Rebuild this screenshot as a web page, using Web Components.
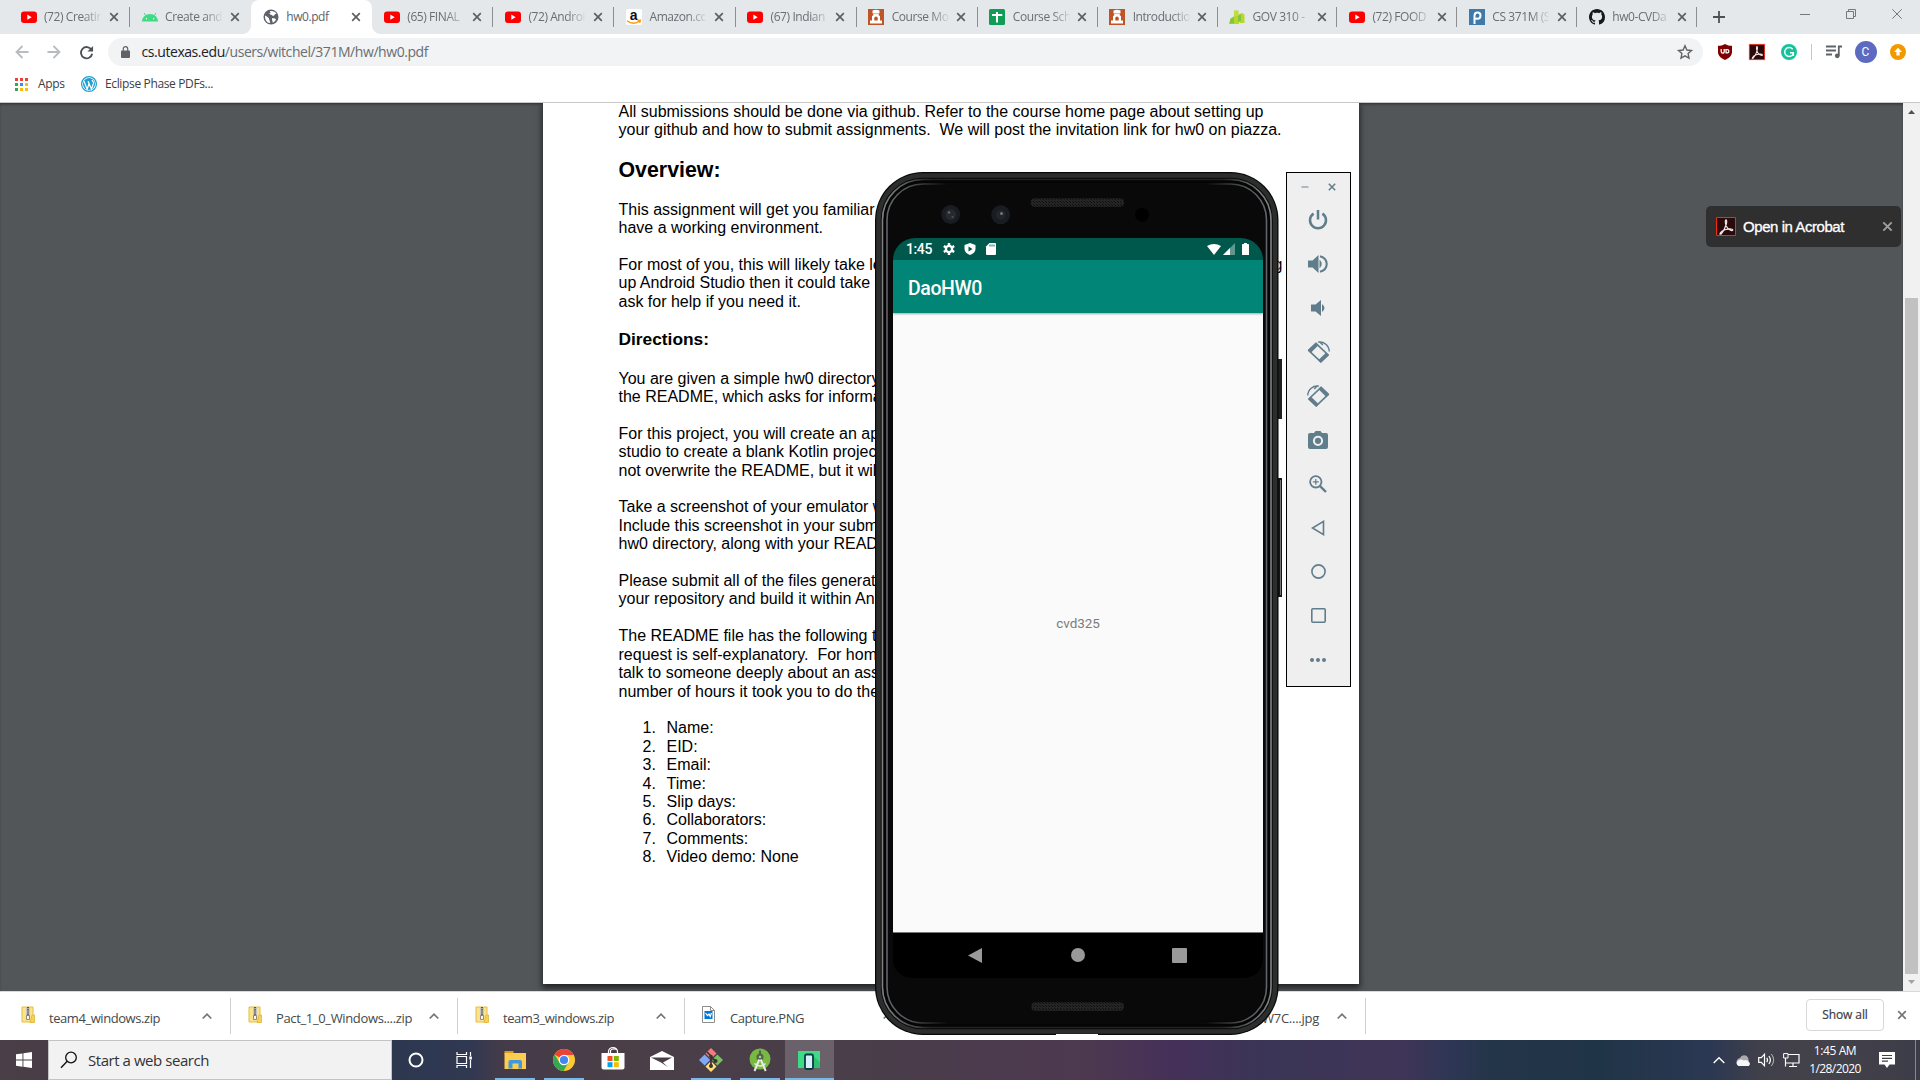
<!DOCTYPE html>
<html lang="en">
<head>
<meta charset="utf-8">
<title>hw0.pdf</title>
<style>
html,body{margin:0;height:100%;overflow:hidden}
body{font-family:"Open Sans","Noto Sans",sans-serif}
</style>
</head>
<body>
<desktop-screen></desktop-screen>
<script>
const SLATE = '#607d8b';
const YT = '<rect x="0" y="2.5" width="16" height="11.5" rx="3" fill="#f00"/><path d="M6.3 5.6l4.4 2.6-4.4 2.6z" fill="#fff"/>';
const TOWER = '<path d="M0 0h16v16H0z" fill="#bf5427"/><path d="M4.500 1.500q3.500-1.500 7 0v3h-.7v2.200h1.200v4.800H14v3H2v-3h2V6.700h1.200V4.500h-.7z" fill="#fff"/><path d="M6.300 11.500V9.200a1.700 1.700 0 013.400 0v2.300z" fill="#bf5427"/><path d="M4.500 4.300h7v.8h-7z" fill="#bf5427" opacity=".6"/>';
const ACRO = '<path d="M4 16.500c1.200-2.600 4-3.400 6-4 2-.6 4.200-.9 6-.3 1.500.6.6 1.800-.8 1.300-2.500-.9-5-4-5.600-6.600-.5-2.200-.4-4 .4-4 1 0 .8 2.600.2 4.600-.8 2.600-2.600 6.600-4.700 9-.9 1-2 .8-1.500 0z" fill="none" stroke="#f4e9e7" stroke-width="1.200"/>';
const ZIP = '<path d="M1 1h11v15H1z" fill="#fbe38e" stroke="#e4bd45"/><path d="M11 9h2.500v7.500H9z" fill="#f6d05c" stroke="#dfb534" stroke-width=".8"/><path d="M5 1h4v11H5z" fill="#c9c7bd"/><path d="M7 1v11" stroke="#55534c" stroke-width="2" stroke-dasharray="1.200 1"/><path d="M5.500 9.500h3v4h-3z" fill="#f7f7f2" stroke="#77736a" stroke-width=".8"/>';
const ROT = '<g fill="none" stroke="'+SLATE+'"><path d="M9 2.300L1.600 9.300 13.800 20.900 21.200 14z" stroke-width="1.600" stroke-linejoin="round"/><path d="M9 1.500L.9 9.300l2.700 2.600L11.500 4.300zM13.800 21.800l8.100-7.700-2.700-2.600-8 7.700z" fill="'+SLATE+'" stroke="none"/><path d="M11 1.100C17 .100 22.100 4.500 22.300 10.500M12.500.700l3.300 3.300" stroke-width="1.400"/></g>';
/* name: [viewBox width, viewBox height, markup] */
const ICONS = {
  yt:[16,16,YT], tower:[16,16,TOWER],
  android:[17,16,'<path d="M0 12.500a8.500 7.500 0 0117 0z" fill="#3ddc84"/><path d="M4 6.800L2.300 4M13 6.800L14.700 4" stroke="#3ddc84" stroke-width="1"/><circle cx="4.700" cy="9.700" r=".7" fill="#fff"/><circle cx="12.300" cy="9.700" r=".7" fill="#fff"/>'],
  globe:[16,16,'<circle cx="8" cy="8" r="7.500" fill="#5f6368"/><path d="M2 6.500c1.200.4 2.700 1.600 3.600 2.600.8.8.3 1.600 1 2.400l.7 2.500C4 14.300 1.700 11 2 6.500zM6.500 2.200c1 .3 1.300 1.300.5 2l-1.200.7c.8.9 2.200.2 3 1 .6.800 1.600 1.200 2.400.6l1-1.500 1.400-.2C12.600 3 9.700 1.400 6.500 2.200zM9 9.300c1.400-.4 3.300-.1 4 1.200-.7 1.700-2 2.800-3.300 3.200.2-1.600-1.200-2.600-.7-4.400z" fill="#fff"/>'],
  amazon:[16,16,'<rect width="16" height="16" rx="2" fill="#fff"/><text x="7.600" y="10.800" text-anchor="middle" font-family="Liberation Sans" font-weight="700" font-size="14" fill="#111">a</text><path d="M1 11.800c4 2.800 9 2.800 12.500.4M11.600 11.400l2.800-.2-.8 2.600" fill="none" stroke="#f90" stroke-width="1.400"/>'],
  sheet:[16,16,'<rect width="16" height="16" rx="1.500" fill="#0f9d58"/><path d="M8 3v10.500M3 6h10.300" stroke="#fff" stroke-width="2"/>'],
  clover:[16,16,'<path d="M5 1.500h4.500v4L13 4l2.500 1.500V14H11l-1-2v3H0l1.500-5L5 7z" fill="#b5d82e"/><path d="M1.500 9.500L5 8v6.500H.5zM9 7l3-2v7l-3 1z" fill="#86c53a"/><path d="M5 2h4v5H5z" fill="#c3dc3a"/>'],
  piazza:[16,16,'<path d="M0 0h16v16H0z" fill="#3e7aab"/><path d="M5.500 15V6.800C5.500 4.700 6.700 3.400 8.500 3.400s3 1.300 3 3.200-1.200 3.200-3 3.200c-.8 0-1.400-.3-2-.7" fill="none" stroke="#fff" stroke-width="2"/>'],
  github:[16,16,'<path fill="#16181c" d="M8 0C3.580 0 0 3.580 0 8c0 3.540 2.290 6.530 5.470 7.590.4.070.55-.17.55-.38 0-.19-.01-.82-.01-1.490-2.010.37-2.530-.49-2.690-.94-.09-.23-.48-.94-.82-1.130-.28-.15-.68-.52-.01-.53.63-.01 1.080.58 1.230.82.72 1.210 1.870.87 2.330.66.070-.52.28-.87.51-1.070-1.780-.2-3.640-.89-3.640-3.950 0-.87.31-1.590.82-2.150-.08-.2-.36-1.020.08-2.120 0 0 .67-.21 2.200.82.64-.18 1.320-.27 2-.27s1.360.09 2 .27c1.530-1.040 2.200-.82 2.200-.82.44 1.100.16 1.920.08 2.120.51.560.82 1.270.82 2.150 0 3.070-1.870 3.750-3.650 3.950.29.25.54.73.54 1.480 0 1.070-.01 1.930-.01 2.200 0 .21.15.46.55.38A8.010 8.010 0 0016 8c0-4.420-3.580-8-8-8z"/>'],
  x:[10,10,'<path d="M1.200 1.200l7.600 7.600M8.800 1.200L1.200 8.800" stroke="currentColor" stroke-width="1.700"/>'],
  thinx:[10,10,'<path d="M.3.300l9.400 9.400M9.700.300L.300 9.700" stroke="currentColor" stroke-width="1"/>'],
  plus:[12,12,'<path d="M6 0v12M0 6h12" stroke="#4d5156" stroke-width="1.800"/>'],
  min:[10,10,'<path d="M0 5.500h10" stroke="#777" stroke-width="1"/>'],
  restore:[10,10,'<path d="M.5 2.500h7v7h-7zM2.500 2.500v-2h7v7h-2" fill="none" stroke="#777"/>'],
  back:[14,14,'<path d="M13.500 7H1.500M7.500 1L1.500 7l6 6" fill="none" stroke="#b9bcbf" stroke-width="1.800"/>'],
  fwd:[14,14,'<path d="M.5 7h12M6.500 1l6 6-6 6" fill="none" stroke="#b9bcbf" stroke-width="1.800"/>'],
  reload:[16,16,'<path d="M13.300 5.200A6 6 0 1014 9.300" fill="none" stroke="#4c5054" stroke-width="2"/><path d="M15 1v6H9z" fill="#4c5054"/>'],
  lock:[10,12,'<path d="M1 4.500h8q1 0 1 1v5.500q0 1-1 1H1q-1 0-1-1V5.500q0-1 1-1z" fill="#5f6368"/><path d="M2.500 5V3a2.500 2.400 0 015 0v2" fill="none" stroke="#5f6368" stroke-width="1.300"/>'],
  star:[16,16,'<path d="M8 1.800l1.900 4.200 4.600.5-3.400 3.100.9 4.500L8 11.800l-4 2.300.9-4.500L1.500 6.500l4.600-.5z" fill="none" stroke="#5f6368" stroke-width="1.400"/>'],
  ublock:[14,16,'<path d="M7 0c2 1.400 4.500 1.800 7 1.800v6c0 4-3 6.500-7 8.200-4-1.700-7-4.200-7-8.200v-6C2.500 1.800 5 1.400 7 0z" fill="#800000"/><path d="M3.200 5v2.600q0 1.600 1.500 1.600T6.200 7.600V5M8 5.600v3.200q2.800.4 2.800-1.600T8 5.600z" fill="none" stroke="#fff" stroke-width="1.300"/>'],
  acro:[20,19,'<path d="M.5.500h19v18H.5z" fill="#2a0a0a" stroke="#f02b10"/>'+ACRO],
  gram:[16,16,'<circle cx="8" cy="8" r="8" fill="#15c39a"/><path d="M11.700 5.200A4.500 4.500 0 108 12.500c2.400 0 4.200-1.500 4.300-3.700H9M12.400 8.500v3.500" fill="none" stroke="#fff" stroke-width="1.400"/>'],
  music:[16,14,'<path d="M0 1.500h10M0 5.500h10M0 9.500h6" stroke="#5f6368" stroke-width="1.800"/><path d="M12.800 10.500V1.500H16" fill="none" stroke="#5f6368" stroke-width="1.800"/><circle cx="11.300" cy="10.800" r="2.400" fill="#5f6368"/>'],
  update:[16,16,'<circle cx="8" cy="8" r="8" fill="#f29900"/><path d="M8 3.800l4 4.200H9.600v3.500H6.400V8H4z" fill="#fff"/>'],
  apps:[13,13,'<g><path fill="#ea4335" d="M0 0h3v3H0zM5 0h3v3H5zM10 0h3v3h-3z"/><path fill="#34a853" d="M0 5h3v3H0zM0 10h3v3H0z"/><path fill="#4285f4" d="M5 5h3v3H5z"/><path fill="#fbbc05" d="M10 5h3v3h-3zM5 10h3v3H5zM10 10h3v3h-3z"/></g>'],
  wp:[16,16,'<circle cx="8" cy="8" r="7.400" fill="#fff" stroke="#1e9fd0" stroke-width="1.200"/><circle cx="8" cy="8" r="6" fill="#1e9fd0"/><path d="M3 5.200l3.200 8 1.800-5.400L7 5.200M7.200 5.200l3.300 8 2-6c.3-1.400-1.500-2-1.300-3.200" fill="none" stroke="#fff" stroke-width="1.200"/>'],
  zip:[14,17,ZIP],
  png:[13,17,'<path d="M.5.500h8l4 4v12H.5z" fill="#fff" stroke="#8c8c8c"/><path d="M8.500.500v4h4" fill="none" stroke="#8c8c8c"/><path d="M2.500 5h8v8h-8z" fill="#0078d7"/><path d="M3.500 7l2 2.500L7 8l1.200 2.500L9.500 7" fill="none" stroke="#fff" stroke-width="1.200"/>'],
  chev:[10,6,'<path d="M.7 5.500L5 1.200l4.300 4.300" fill="none" stroke="#747474" stroke-width="1.700"/>'],
  win:[16,16,'<path d="M0 2.300L6.500 1.400v6.200H0zM7.400 1.300L16 0v7.600H7.400zM0 8.500h6.500v6.200L0 13.800zM7.400 8.500H16V16l-8.600-1.200z" fill="#fff"/>'],
  search:[18,18,'<circle cx="11" cy="6.500" r="5.300" fill="none" stroke="#111" stroke-width="1.300"/><path d="M7.200 10.300L1 16.700" stroke="#111" stroke-width="1.400"/>'],
  cortana:[16,16,'<circle cx="8" cy="8" r="6.500" fill="none" stroke="#fff" stroke-width="2"/>'],
  taskview:[17,16,'<path d="M1 0v2.500h9.500V0M1 16v-2.500h9.500V16M1 4.500h9.500v7H1zM14.500 0v4M14.500 8v8" fill="none" stroke="#fff" stroke-width="1.200"/><path d="M13.300 4.500h2.600v3h-2.600z" fill="#fff"/>'],
  explorer:[22,18,'<path d="M.5 0h9v3H.5z" fill="#e19a18"/><path d="M.5 2H22v16H.5z" fill="#fccd4e"/><path d="M4.500 17.500V11q0-2 2-2H16q2 0 2 2v6.500h-3.500v-5h-6v5z" fill="#3c9be0"/>'],
  chrome:[22,22,'<circle cx="11" cy="11" r="11" fill="#fcc934"/><path d="M11 11L1.500 5.500A11 11 0 0120.500 5.500L20.800 6H11z" fill="#ea4335"/><path d="M1.500 5.500A11 11 0 0010.500 22L15.500 13.500 11 11 6.500 13.500z" fill="#34a853"/><circle cx="11" cy="11" r="5.300" fill="#fff"/><circle cx="11" cy="11" r="4.100" fill="#4285f4"/>'],
  store:[24,23,'<path d="M7.500 6.500V4.500a4.500 4 0 019 0v2M9.500 6V3.500a4 3 0 017 0" fill="none" stroke="#fff" stroke-width="1.200"/><path d="M.5 6h23v14.500q0 2-2 2h-19q-2 0-2-2z" fill="#fff"/><path d="M6.500 9h5v5h-5z" fill="#f25022"/><path d="M12.800 9h5v5h-5z" fill="#7fba00"/><path d="M6.500 15.200h5v5h-5z" fill="#00a4ef"/><path d="M12.800 15.200h5v5h-5z" fill="#ffb900"/>'],
  mail:[24,19,'<path d="M0 6L12 0l12 6v13H0z" fill="#fff"/><path d="M1 6.500h21L13 11.500l5 4.700-6.500-4.500z" fill="#4a3f47"/>'],
  git:[24,24,'<path d="M12 0l5.500 5.500L12 11 6.500 5.500z" fill="#f07c7c"/><path d="M5.600 6.400L11.100 12l-5.500 5.500L0 12z" fill="#7fa9f5"/><path d="M18.400 6.400L24 12l-5.600 5.500L12.900 12z" fill="#7bbf5e"/><path d="M12 13l5.500 5.500L12 24l-5.500-5.500z" fill="#ffe07a"/><path d="M8 4l4 4v10M12 9l4.500 4" fill="none" stroke="#3c3038" stroke-width="1.700"/><circle cx="12" cy="8.500" r="1.800" fill="#3c3038"/><circle cx="12" cy="18" r="2" fill="#3c3038"/><circle cx="16.500" cy="13" r="2" fill="#3c3038"/>'],
  studio:[22,24,'<circle cx="11" cy="11" r="10.500" fill="#78b943"/><circle cx="11" cy="9" r="3.500" fill="#52624c"/><circle cx="11" cy="9" r="1.300" fill="#a8d080"/><path d="M11 2.500v4" stroke="#52624c" stroke-width="2"/><path d="M10.300 11.500L5.500 23M11.700 11.500l5 11.500" stroke="#e8ebe6" stroke-width="2"/><path d="M5.500 15.500q5.500 5 11 0" stroke="#e8ebe6" stroke-width="1.500" fill="none"/>'],
  emu:[22,19,'<path d="M0 0h22v17H0z" fill="#3ddc84"/><path d="M12 2l10 9v6H12z" fill="#2ec070"/><rect x="7" y="3.500" width="8" height="14.500" rx="1.500" fill="#d8effa" stroke="#0b3a44" stroke-width="1.800"/>'],
  traychev:[12,8,'<path d="M.7 7L6 1.700 11.300 7" fill="none" stroke="#fff" stroke-width="1.400"/>'],
  cloud:[16,11,'<path d="M2 9a4 4 0 013-6 4.500 4.500 0 018-.5l1 4z" fill="#a9a9ae"/><path d="M3.500 11A3 3 0 013 5.700Q6 3.300 8.500 5.500 12 4 13.500 6.500A2.600 2.600 0 0113.700 11z" fill="#f7f7f7"/>'],
  sound:[17,14,'<path d="M.7 4.700h2.600L6.500 1.200v11.600L3.300 9.300H.7z" fill="none" stroke="#fff" stroke-width="1.200"/><path d="M8.700 4.800q1.700 2.200 0 4.400M10.900 3q3 4 0 8" fill="none" stroke="#fff" stroke-width="1.200"/><path d="M13.400 1q4.500 6 0 12" fill="none" stroke="#aaa" stroke-width="1.100"/>'],
  net:[17,15,'<path d="M4.500 1.500H16v8.500H3M10 10v3.500M6 13.500h8M2.500 5v8.500" fill="none" stroke="#fff" stroke-width="1.200"/><path d="M.6.600h4.400v4.400H.6z" fill="#40404b" stroke="#fff"/>'],
  note:[16,16,'<path d="M0 0h16v12.500h-5.500L8 16l-2.500-3.500H0z" fill="#fff"/><path d="M3 3.500h10M3 6.300h10M3 9.100h6" stroke="#403e48" stroke-width="1.200"/>'],
  power:[20,20,'<path d="M5.600 3.600a8 8 0 108.800 0M10 0v9.500" fill="none" stroke="'+SLATE+'" stroke-width="2.500"/>'],
  volup:[20,18,'<path d="M0 5.500h4.500L10.500 0v18l-6-5.500H0z" fill="'+SLATE+'"/><path d="M11.500 4.500q4.500 4.500 0 9z" fill="'+SLATE+'"/><path d="M12 1.200q6.700 1.800 6.700 7.800T12 16.800" fill="none" stroke="'+SLATE+'" stroke-width="2.100"/>'],
  voldn:[15,16,'<path d="M0 4.500h4.500L10 0v16l-5.500-4.500H0z" fill="'+SLATE+'"/><path d="M11 4q5 4 0 8z" fill="'+SLATE+'"/>'],
  rotl:[23,22,ROT],
  rotr:[23,22,'<g transform="matrix(-1 0 0 1 23 0)">'+ROT+'</g>'],
  cam:[20,18,'<path d="M6 2l1.500-2h5L14 2h4q2 0 2 2v12q0 2-2 2H2q-2 0-2-2V4q0-2 2-2z" fill="'+SLATE+'"/><circle cx="10" cy="9.800" r="4.100" fill="none" stroke="#efefef" stroke-width="2"/>'],
  zoom:[18,18,'<circle cx="6.800" cy="6.800" r="5.700" fill="none" stroke="'+SLATE+'" stroke-width="1.800"/><path d="M10.800 10.800L17 17" stroke="'+SLATE+'" stroke-width="2.400"/><path d="M6.800 3.900v5.800M3.900 6.800h5.800" stroke="'+SLATE+'" stroke-width="1.200"/>'],
  tri:[14,16,'<path d="M12.500 1.300v13.400L1.500 8z" fill="none" stroke="'+SLATE+'" stroke-width="1.600"/>'],
  circ:[15,15,'<circle cx="7.500" cy="7.500" r="6.600" fill="none" stroke="'+SLATE+'" stroke-width="1.600"/>'],
  sq:[15,15,'<rect x=".8" y=".8" width="13.400" height="13.400" rx="1" fill="none" stroke="'+SLATE+'" stroke-width="1.600"/>'],
  dots:[16,4,'<g fill="'+SLATE+'"><circle cx="2" cy="2" r="2"/><circle cx="8" cy="2" r="2"/><circle cx="14" cy="2" r="2"/></g>'],
  winmin:[8,8,'<path d="M.5 4h7" stroke="#9aadb7" stroke-width="1.600"/>'],
  winx:[8,8,'<path d="M.8.800l6.400 6.400M7.200.800L.8 7.200" stroke="'+SLATE+'" stroke-width="1.500"/>'],
  gear:[12,12,'<circle cx="6" cy="6" r="3.100" fill="none" stroke="#fff" stroke-width="2.400"/><path d="M6 0v2.500M6 9.500V12M.8 3l2.200 1.300M9 7.700L11.200 9M.8 9L3 7.700M9 4.300L11.200 3" stroke="#fff" stroke-width="2.500"/>'],
  shield:[12,12,'<path d="M6 0l5.500 2v4c0 3-2.500 5-5.500 6C3 11 .5 9 .5 6V2z" fill="#fff"/><path d="M4.500 3.500L8.500 6l-4 2.500z" fill="#00574b"/>'],
  sd:[10,12,'<path d="M3.500 0H9q1 0 1 1v10q0 1-1 1H1q-1 0-1-1V3.500z" fill="#fff"/><path d="M4 1.500v2M6 1.500v2M8 1.500v2" stroke="#00574b" stroke-width=".9"/>'],
  wifi:[14,11,'<path d="M0 2Q7-2 14 2L7 11z" fill="#fff"/>'],
  signal:[12,12,'<path d="M12 0v12H0z" fill="#5f988f"/><path d="M7 5v7H0z" fill="#fff"/>'],
  batt:[7,12,'<path d="M2 0h3v1h1.200q.8 0 .8.800V12H0V1.800Q0 1 .8 1H2z" fill="#fff"/>'],
  navback:[14,15,'<path d="M14 0v15L0 7.500z" fill="#999"/>'],
  navhome:[14,14,'<circle cx="7" cy="7" r="7" fill="#999"/>'],
  navsq:[15,15,'<rect width="15" height="15" rx="1" fill="#999"/>'],
  up:[7,4,'<path d="M3.500 0L7 4H0z" fill="#505050"/>'],
  down:[7,4,'<path d="M3.500 4L7 0H0z" fill="#a3a3a3"/>']
};
function define(name, css, html, after) {
  const t = document.createElement('template');
  t.innerHTML = '<style>*{box-sizing:border-box}' + css + '</style>' + html;
  customElements.define(name, class extends HTMLElement {
    connectedCallback() {
      if (this.shadowRoot) return;
      this.attachShadow({mode:'open'}).appendChild(t.content.cloneNode(true));
      if (after) after(this, this.shadowRoot);
    }
  });
}
const I = (n, style='', w, h) => `<ui-icon name="${n}"${w?` w="${w}"`:''}${h?` h="${h}"`:''} style="${style}"></ui-icon>`;

define('ui-icon', ':host{display:block;flex:none;line-height:0}svg{display:block;overflow:visible}', '<span></span>', (el, root) => {
  const [vw, vh, body] = ICONS[el.getAttribute('name')];
  const w = el.getAttribute('w') || vw, h = el.getAttribute('h') || vh;
  root.querySelector('span').innerHTML = `<svg width="${w}" height="${h}" viewBox="0 0 ${vw} ${vh}" preserveAspectRatio="none">${body}</svg>`;
});

/* One line of text tracked so that it fills the width given in "w". */
define('fit-text', ':host{display:block;flex:none;white-space:pre}span{display:inline-block}', '<span><slot></slot></span>', (el, root) => {
  const s = root.querySelector('span'), w = +el.getAttribute('w'), n = el.textContent.length;
  if (w) s.style.letterSpacing = ((w - s.getBoundingClientRect().width) / n) + 'px';
});

define('browser-tab', `
:host{display:flex;box-sizing:border-box;flex:0 0 121.100px;height:34px;align-items:center;padding-left:11.500px;position:relative;color:#6a6e72;font-size:12px}
:host([narrow]){flex-basis:119.900px}
:host([sep])::after{content:"";position:absolute;right:0;top:7px;width:1px;height:20px;background:#8b8f93}
:host([active]){background:#fff;border-radius:8px 8px 0 0;color:#5f6368}
:host([active])::before,:host([active])::after{content:"";position:absolute;bottom:0;width:8px;height:8px}
:host([active])::before{left:-8px;background:radial-gradient(circle at 0 0,#0000 7.500px,#fff 8px)}
:host([active])::after{right:-8px;background:radial-gradient(circle at 100% 0,#0000 7.500px,#fff 8px)}
.t{width:57px;margin:0 7.500px;overflow:hidden;white-space:pre;letter-spacing:-.42px;line-height:18px;-webkit-mask:linear-gradient(90deg,#000 68%,#0003 97%,#0000)}
:host([active]) .t{-webkit-mask:none}
`, '<slot name="icon"></slot><span class="t"><slot></slot></span><ui-icon name="x" w="10" h="10" style="color:#5c6064"></ui-icon>');

const TABS = [['yt','(72) Creatin'],['android','Create and'],['globe','hw0.pdf'],['yt','(65) FINAL'],['yt','(72) Androi'],['amazon','Amazon.co'],['yt','(67) Indian'],['tower','Course Mo'],['sheet','Course Sch'],['tower','Introductio'],['clover','GOV 310 -'],['yt','(72) FOOD'],['piazza','CS 371M (S'],['github','hw0-CVDa']];
define('tab-strip', `
:host{display:flex;box-sizing:border-box;height:34px;background:#e4e8eb;padding-left:9px;align-items:center}
.w{margin-left:auto;display:flex;gap:36px;align-items:center;padding-right:18.500px;margin-bottom:6px}
`, TABS.map(([ic,t],i)=>`<browser-tab ${i===2?'active':i===1?'':'sep'}${i>7?' narrow':''}>${I(ic,'',16,16).replace('<ui-icon','<ui-icon slot="icon"')}${t}</browser-tab>`).join('') +
 I('plus','margin-left:16px') + '<div class="w">' + I('min') + I('restore') + I('thinx','color:#777') + '</div>');

define('address-bar', `
:host{display:flex;box-sizing:border-box;height:36px;align-items:center;background:#fff;padding-left:15px}
.box{display:flex;align-items:center;width:1595px;height:28px;border-radius:14px;background:#f1f3f4;margin-left:14px;padding:0 10px 0 13px;font-size:14px;color:#6a6e72}
.box fit-text{margin-left:12px;line-height:20px}
b{font-weight:400;color:#202124}
.sep{width:1px;height:16px;background:#c4c7ca;margin-left:14px}
.av{width:22px;height:22px;border-radius:50%;background:#5c6bc0;color:#fff;font:12px/22px Roboto,sans-serif;text-align:center;margin-left:13px}
`, I('back') + I('fwd','margin-left:18px') + I('reload','margin-left:17.500px',15,15) +
 '<div class="box">' + I('lock','',9,12) + '<fit-text w="286.500"><b>cs.utexas.edu</b>/users/witchel/371M/hw/hw0.pdf</fit-text>' + I('star','margin-left:auto') + '</div>' +
 I('ublock','margin-left:15px') + I('acro','margin-left:17px',16,16) + I('gram','margin-left:16px') + '<div class="sep"></div>' + I('music','margin-left:14px') + '<div class="av">C</div>' + I('update','margin-left:13px'));

define('bookmark-bar', `
:host{display:flex;box-sizing:border-box;height:33px;align-items:center;background:#fff;border-bottom:1px solid #c8c8c8;padding:0 0 4px 15px;font-size:12px;color:#3c4043;position:relative;z-index:1}
fit-text{line-height:18px}
`, I('apps') + '<fit-text w="26.500" style="margin-left:10px">Apps</fit-text>' + I('wp','margin-left:16px') + '<fit-text w="108" style="margin-left:8.500px">Eclipse Phase PDFs...</fit-text>');

define('pdf-page', `
:host{display:block;box-sizing:border-box;width:816px;height:881px;background:#fff;box-shadow:0 3px 6px 1px #0009;padding-left:75.500px;font:16px/18.385px "Liberation Sans",Arial,sans-serif;color:#000;overflow:hidden}
p{margin:0 0 18.400px;white-space:pre}
p.first{margin:0 0 18.100px}
h2{margin:0 0 18px;font-size:21.330px;line-height:25px}
h3{margin:-.6px 0 20.700px;font-size:17.330px;line-height:20px}
.row{display:flex;justify-content:space-between;width:664px}
ol{margin:0;padding:0;list-style:none}
li{display:flex}
li i{font-style:normal;width:48px;padding-left:24px;flex:none}
`, `<p class="first"><fit-text w="645">All submissions should be done via github. Refer to the course home page about setting up</fit-text><fit-text w="663">your github and how to submit assignments.  We will post the invitation link for hw0 on piazza.</fit-text></p>
<h2><fit-text w="102">Overview:</fit-text></h2><p>This assignment will get you familiar
have a working environment.</p><p><span class="row"><span>For most of you, this will likely take le</span><span>g</span></span>up Android Studio then it could take
ask for help if you need it.</p><h3><fit-text w="90.500">Directions:</fit-text></h3><p>You are given a simple hw0 directory
the README, which asks for informa</p><p>For this project, you will create an ap
studio to create a blank Kotlin projec
not overwrite the README, but it wil</p><p>Take a screenshot of your emulator w
Include this screenshot in your subm
hw0 directory, along with your READ</p><p style="margin-bottom:18.700px">Please submit all of the files generat
your repository and build it within An</p><p>The README file has the following t
request is self-explanatory.  For hom
talk to someone deeply about an ass
number of hours it took you to do the</p><ol>` +
['Name:','EID:','Email:','Time:','Slip days:','Collaborators:','Comments:','Video demo: None'].map((t,i)=>`<li><i>${i+1}.</i>${t}</li>`).join('') + '</ol>');

define('scroll-bar', `
:host{display:flex;box-sizing:border-box;flex-direction:column;align-items:center;width:17px;background:#f1f1f1;padding:7px 0}
.thumb{width:13px;height:676px;margin-top:184px;background:#c1c1c1}
`, I('up') + '<div class="thumb"></div>' + I('down','margin-top:6px'));

define('acrobat-prompt', `
:host{display:flex;box-sizing:border-box;align-items:center;width:195px;height:41px;border-radius:5px;background:#2f2f2f;color:#fff;padding:0 8px 0 10px;font:15px/20px "Liberation Sans",Arial,sans-serif;-webkit-text-stroke:.3px #fff}
fit-text{margin-left:7px}
`, I('acro') + '<fit-text w="101">Open in Acrobat</fit-text>' + I('x','margin-left:auto;color:#a0a0a0',11,11));

define('pdf-viewer', `
:host{display:flex;height:888px;background:#525659;position:relative;overflow:hidden}
.v{flex:1;padding-left:543px;box-shadow:inset 0 2px 3px -1px #0007}
acrobat-prompt{position:absolute;right:19px;top:103px}
`, '<div class="v"><pdf-page></pdf-page></div><scroll-bar></scroll-bar><acrobat-prompt></acrobat-prompt>');

define('download-item', `
:host{display:flex;box-sizing:border-box;align-items:center;flex:0 0 227px;height:36px;border-right:1px solid #cfcfcf;padding:0 18.500px 0 17px;font-size:13px;color:#45484b}
`, '<slot name="icon"></slot><slot></slot><ui-icon name="chev" style="margin:0 0 1px auto"></ui-icon>');

define('download-shelf', `
:host{display:flex;box-sizing:border-box;height:49px;border-top:1px solid #d9dadc;background:#fff;align-items:center;padding-left:4px}
fit-text{line-height:18px;margin:3px 0 0 14px}
.all{margin-left:auto;width:78px;height:32px;border:1px solid #d6d8db;border-radius:4px;display:flex;align-items:center;justify-content:center;font-size:12px;color:#3c4043;-webkit-text-stroke:.2px #3c4043;margin-bottom:3px}
.all fit-text{margin:0}
`, [['zip','team4_windows.zip',111],['zip','Pact_1_0_Windows....zip',136],['zip','team3_windows.zip',111],['png','Capture.PNG',74]].map(([ic,t,w])=>
 `<download-item>${I(ic,'margin-bottom:3px' + (ic==='png' ? ';margin-right:1px' : ''))}<fit-text w="${w}">${t}</fit-text></download-item>`).join('').replace(/<ui-icon /g,'<ui-icon slot="icon" ') +
 '<download-item style="margin-left:227px"><fit-text w="57" style="margin-left:106px">W7C....jpg</fit-text></download-item><div class="all"><fit-text w="45.500">Show all</fit-text></div>' + I('x','margin:0 13px 2px;color:#74777a'));

define('task-button', `
:host{display:flex;box-sizing:border-box;align-items:center;justify-content:center;position:relative;flex:0 0 49px;height:40px}
:host([running])::after{content:"";position:absolute;left:4.500px;right:4.500px;bottom:0;height:2px;background:#76b9ed}
:host([current]){background:#6b616b}
:host([current])::after{left:0;right:0}
`, '<slot></slot>');

define('task-bar', `
:host{display:flex;height:40px;align-items:center;background:linear-gradient(90deg,#4a3e47 0,#483d46 48px,#2d3750 392px,#303852 470px,#443b4a 500px,#4a3e47 620px,#493e49 850px,#4d3850 1090px,#443059 1180px,#3a3556 1260px,#403558 1400px,#2e3655 1450px,#243549 1490px,#203447 1600px,#2b3853 1710px,#40404a 1760px,#44424b 1830px,#3c3c48 1920px);color:#fff}
.start{width:48px;display:flex;justify-content:center}
.search{width:344px;height:40px;background:#f2f2f2;border:1px solid #c3c3c5;display:flex;align-items:center;padding-left:11px;color:#333;font-size:15px}
.search fit-text{margin:0 0 1px 10px;line-height:20px}
.tray{margin-left:auto;display:flex;align-items:center}
.clock{display:flex;flex-direction:column;align-items:center;font-size:12px;line-height:18px;margin-left:10px;width:52px}
.clock fit-text{position:relative;left:-1px}
.end{width:1px;height:40px;background:#8a8790;margin:0 4.500px 0 19.500px}
`, '<div class="start">'+I('win')+'</div><div class="search">'+I('search')+'<fit-text w="121">Start a web search</fit-text></div>' +
 `<task-button style="flex-basis:48px">${I('cortana')}</task-button><task-button style="flex-basis:48px;margin-right:2.500px">${I('taskview')}</task-button>` +
 `<task-button running>${I('explorer')}</task-button><task-button running>${I('chrome')}</task-button><task-button>${I('store','margin-bottom:4px')}</task-button><task-button>${I('mail')}</task-button><task-button running>${I('git')}</task-button><task-button running>${I('studio')}</task-button><task-button running current>${I('emu')}</task-button>` +
 '<div class="tray">' + I('traychev') + I('cloud','margin-left:10px') + I('sound','margin-left:7px') + I('net','margin-left:8px') + '<div class="clock"><fit-text w="42.500">1:45 AM</fit-text><fit-text w="51.500">1/28/2020</fit-text></div>' + I('note','margin-left:17px') + '<div class="end"></div></div>');

define('phone-screen', `
:host{display:flex;flex-direction:column;width:370px;height:740px;border-radius:22px 22px 19px 19px;overflow:hidden;font-family:Roboto,sans-serif;color:#fff}
.status{height:22px;background:#00574b;display:flex;align-items:center;padding:0 14.500px 0 13px;font-size:14px;font-weight:500}
.app{height:53px;background:#008577;padding:16.500px 0 0 15px;font-size:19.500px;font-weight:500;line-height:24px;position:relative;box-shadow:0 1px 2px #0005}
.body{flex:1;background:#fafafa;display:flex;align-items:center;justify-content:center;padding-top:1.500px;color:#7c7c7c;font-size:13.500px;font-weight:400}
.nav{height:46px;background:#000;display:flex;padding:15px 76px 0 75px;justify-content:space-between;border-top:1px solid #777}
`, '<div class="status"><fit-text w="26">1:45</fit-text>' + I('gear','margin-left:11px') + I('shield','margin-left:9px') + I('sd','margin-left:10px') + I('wifi','margin-left:auto') + I('signal','margin-left:2px') + I('batt','margin-left:7px') + '</div><div class="app"><fit-text w="74">DaoHW0</fit-text></div><div class="body"><fit-text w="43.500">cvd325</fit-text></div><div class="nav">' + I('navback') + I('navhome','margin-left:1px') + I('navsq') + '</div>');

const ring = (i, w, c) => `<rect x="${i}" y="${i}" width="${403.5-2*i}" height="${863-2*i}" rx="${48-i}" fill="none" stroke="${c}" stroke-width="${w}"/>`;
define('phone-device', `
:host{display:block;width:408px;height:864px}
svg.f{position:absolute;left:0;top:0}
phone-screen{position:absolute;left:18px;top:66px}
`, `<svg class="f" width="408" height="864" viewBox="0 0 408 864"><defs>
<linearGradient id="a" gradientUnits="userSpaceOnUse" x1="0" x2="403"><stop offset="0" stop-color="#8d8d8d"/><stop offset=".05" stop-color="#707070"/><stop offset=".14" stop-color="#222"/><stop offset=".86" stop-color="#222"/><stop offset=".95" stop-color="#707070"/><stop offset="1" stop-color="#8d8d8d"/></linearGradient>
<linearGradient id="b" gradientUnits="userSpaceOnUse" x1="0" x2="403"><stop offset="0" stop-color="#6a6b72"/><stop offset=".08" stop-color="#55565c"/><stop offset=".18" stop-color="#0a0a0a"/><stop offset=".82" stop-color="#0a0a0a"/><stop offset=".92" stop-color="#55565c"/><stop offset="1" stop-color="#6a6b72"/></linearGradient>
<pattern id="m" width="3" height="3" patternUnits="userSpaceOnUse"><path d="M0 0h3v3H0z" fill="#252525"/><path d="M0 0h1v1H0zM2 2h1v1H2z" fill="#101010"/></pattern></defs>
<path d="M402 187h5v60h-5z" fill="#202020"/><path d="M402 306h5v119h-5z" fill="#151515"/><path d="M405.500 308v115" stroke="#777"/>
<rect width="403.500" height="863" rx="48" fill="#080808"/>${ring(3.5,4.5,'#2c2e2e')}${ring(7.5,1.6,'url(#a)')}${ring(9.8,2,'#050505')}${ring(12,1.6,'url(#b)')}<rect x="13.500" y="13.500" width="376.500" height="836" rx="35" fill="#090909"/>
<rect x="155.700" y="26.300" width="93.300" height="8.400" rx="4" fill="url(#m)"/><rect x="156.400" y="830.300" width="92.500" height="8.500" rx="4" fill="url(#m)"/>
<g><circle cx="75.700" cy="42.500" r="9.500" fill="#171d23"/><circle cx="75.700" cy="42.500" r="5.500" fill="#26292d"/><circle cx="74" cy="40.500" r="1.300" fill="#666"/><circle cx="77.500" cy="45" r="1" fill="#555"/></g>
<g><circle cx="125.700" cy="42.700" r="9.500" fill="#171d23"/><circle cx="125.700" cy="42.700" r="5" fill="#22252a"/><circle cx="126.500" cy="41.500" r="1.500" fill="#777"/></g>
<circle cx="267" cy="42.700" r="7" fill="#000"/><path d="M181 862.500h42" stroke="#fff"/></svg><phone-screen></phone-screen>`);

define('emulator-tools', `
:host{display:flex;box-sizing:border-box;flex-direction:column;width:65px;height:515px;background:#efefef;border:1px solid #000}
.w{display:flex;justify-content:center;gap:19px;height:25px;padding-top:10px}
.c{height:44px;display:flex;align-items:center;justify-content:center;flex:none;padding:0 1px 1px 0}
`, '<div class="w">' + I('winmin') + I('winx') + '</div>' + ['power','volup','voldn','rotl','rotr','cam','zoom','tri','circ','sq','dots'].map(n=>`<div class="c">${I(n)}</div>`).join(''));

define('desktop-screen', `
:host{display:flex;flex-direction:column;width:1920px;height:1080px;position:relative;overflow:hidden}
phone-device{position:absolute;left:875px;top:172px}
emulator-tools{position:absolute;left:1286px;top:172px}
`, '<tab-strip></tab-strip><address-bar></address-bar><bookmark-bar></bookmark-bar><pdf-viewer></pdf-viewer><download-shelf></download-shelf><task-bar></task-bar><phone-device></phone-device><emulator-tools></emulator-tools>');
</script>
</body>
</html>
